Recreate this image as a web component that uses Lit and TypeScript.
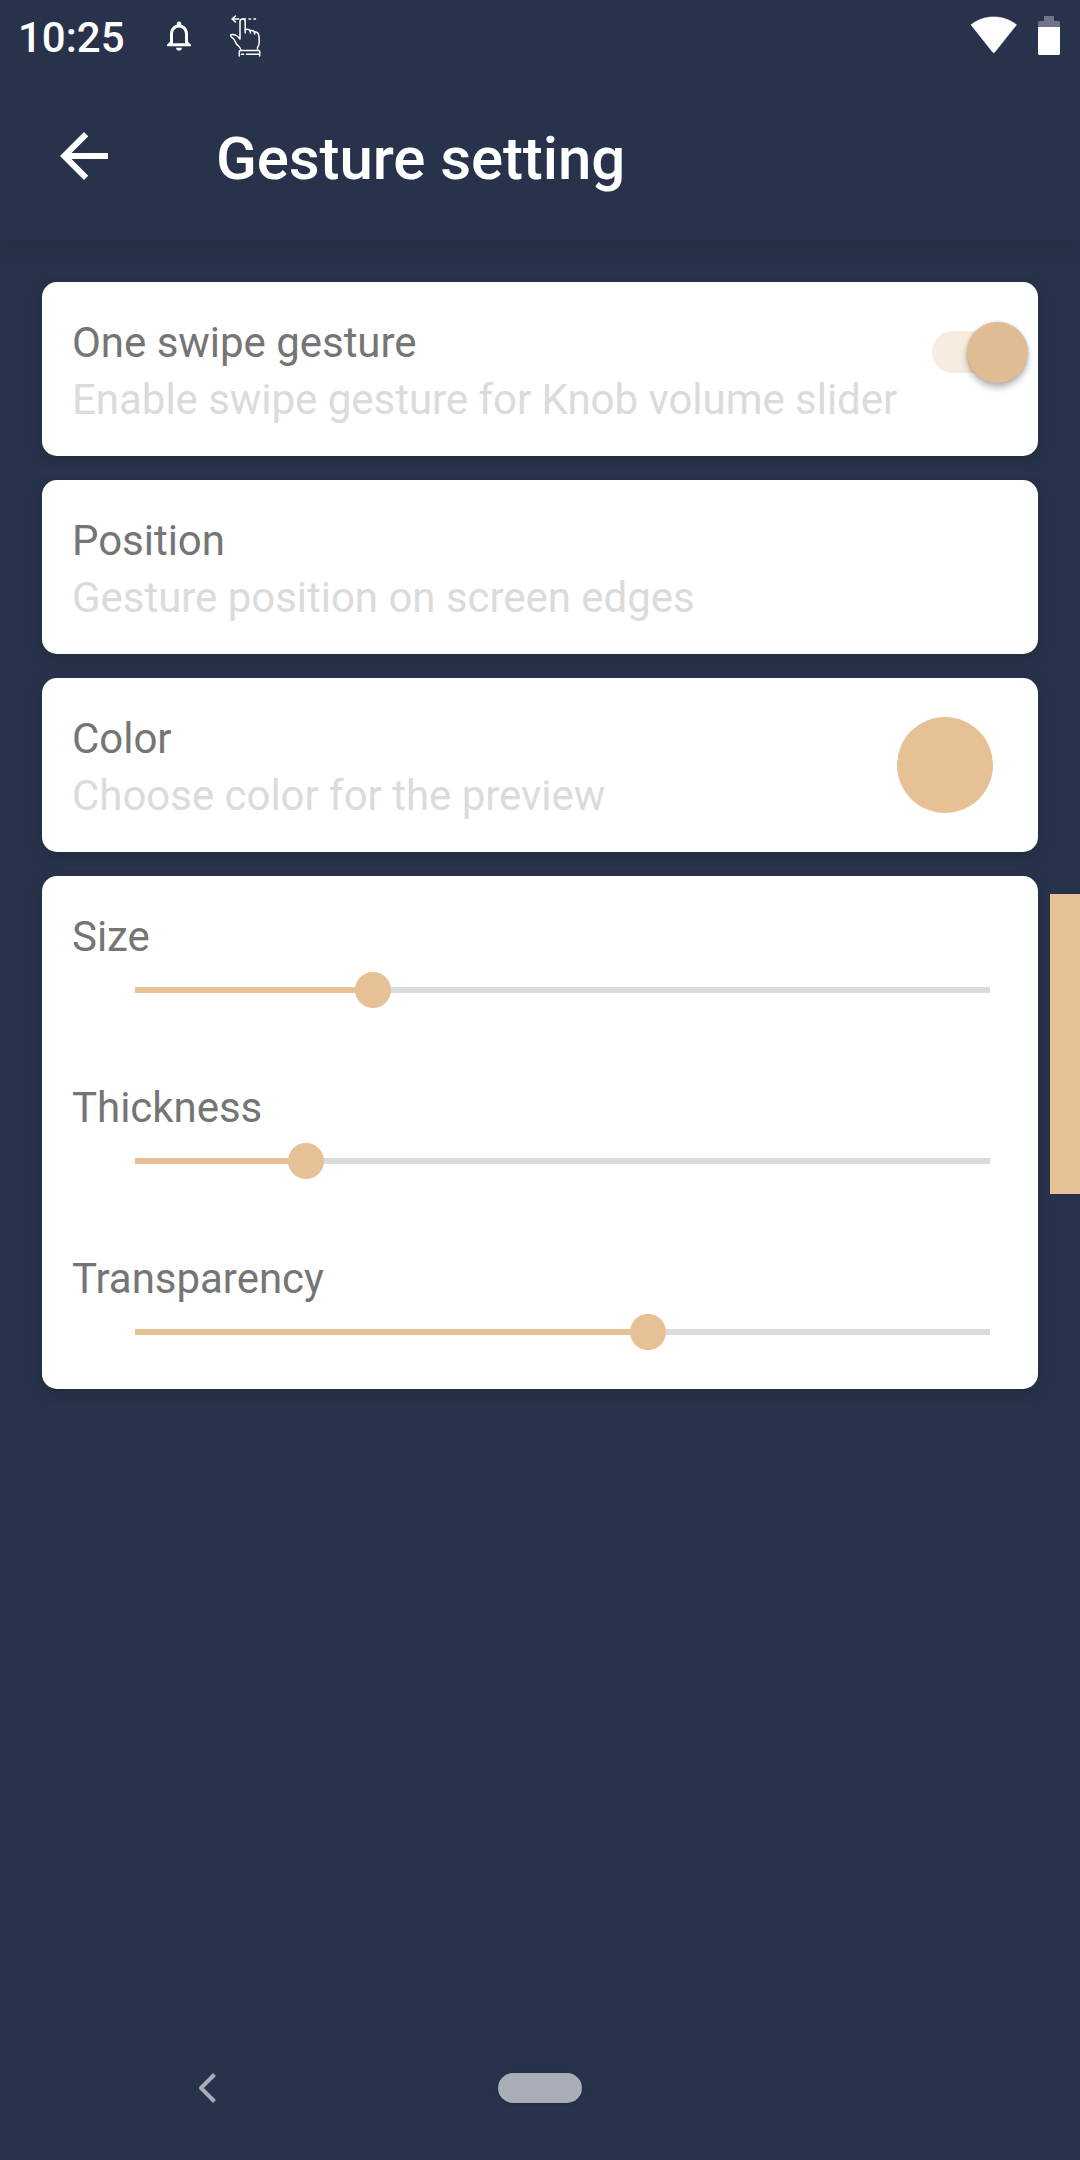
import { LitElement, html, css } from "lit";
import { customElement, property } from "lit/decorators.js";

@customElement("setting-slider")
class SettingSlider extends LitElement {
  @property() label = "";
  @property({ type: Number }) value = 0;

  static styles = css`
    :host {
      display: block;
      height: 171px;
    }
    .label {
      color: #757575;
      font-size: 42px;
      line-height: 50px;
      letter-spacing: -0.03px;
    }
    .bar {
      margin: 10px 18px 0 63px;
      height: 36px;
      display: flex;
      align-items: center;
    }
    .done {
      height: 6px;
      background: #e6c196;
    }
    .knob {
      flex: none;
      width: 36px;
      height: 36px;
      margin: 0 -18px;
      border-radius: 50%;
      background: #e6c196;
      z-index: 1;
    }
    .rest {
      flex: 1;
      height: 6px;
      background: #dbdbdb;
    }
  `;

  render() {
    return html`
      <div class="label">${this.label}</div>
      <div class="bar">
        <div class="done" style="width:${this.value}%"></div>
        <div class="knob"></div>
        <div class="rest"></div>
      </div>
    `;
  }
}

@customElement("app-root")
class AppRoot extends LitElement {
  static styles = css`
    :host {
      display: block;
      font-family: Roboto, "Liberation Sans", sans-serif;
    }
    .screen {
      position: relative;
      display: flex;
      flex-direction: column;
      width: 1080px;
      height: 2160px;
      overflow: hidden;
      background: #28324b;
    }
    svg {
      display: block;
      flex: none;
    }
    .status {
      display: flex;
      height: 72px;
      align-items: flex-start;
    }
    .time {
      box-sizing: border-box;
      width: 143px;
      padding: 13px 0 0 18px;
      color: #fff;
      font-size: 42px;
      line-height: 50px;
      font-weight: 500;
    }
    .spacer {
      flex: 1;
    }
    .appbar {
      display: flex;
      height: 168px;
      box-shadow: 0 5px 10px -2px rgba(35, 47, 62, 0.85);
      clip-path: inset(0 0 -20px 0);
    }
    .back {
      margin: 48px 0 0 48px;
    }
    h1 {
      margin: 52px 0 0 96px;
      color: #fff;
      font-size: 60px;
      line-height: 70px;
      font-weight: 500;
      letter-spacing: -0.1px;
      white-space: nowrap;
    }
    main {
      flex: 1;
      display: flex;
      flex-direction: column;
      gap: 24px;
      padding: 42px 42px 0;
    }
    .card {
      box-sizing: border-box;
      display: flex;
      justify-content: space-between;
      height: 174px;
      padding: 36px 30px 0;
      border-radius: 15px;
      background: #fff;
      box-shadow: 0 4px 10px rgba(33, 46, 58, 0.9);
    }
    .title,
    .hint {
      color: #757575;
      font-size: 42px;
      line-height: 50px;
      letter-spacing: -0.03px;
      white-space: nowrap;
    }
    .hint {
      margin-top: 7px;
      color: #dbdbdb;
    }
    .sliders {
      display: block;
      height: 513px;
    }
    .switch {
      display: flex;
      align-items: flex-start;
      width: 96px;
      height: 61px;
      margin: 4px -20px 0 0;
    }
    .track {
      width: 87px;
      height: 42px;
      margin-top: 9px;
      border-radius: 21px;
      background: #f7ebe0;
    }
    .thumb {
      flex: none;
      width: 61px;
      height: 61px;
      margin-left: -52px;
      border-radius: 50%;
      background: #dfbc93;
      box-shadow: 0 5px 6px rgba(0, 0, 0, 0.26), 0 0 3px rgba(0, 0, 0, 0.18);
    }
    .swatch {
      width: 96px;
      height: 96px;
      margin: 3px 15px 0 0;
      border-radius: 50%;
      background: #e6c196;
    }
    .edge {
      position: absolute;
      right: 0;
      top: 894px;
      width: 30px;
      height: 300px;
      background: #e6c196;
    }
    .nav {
      display: flex;
      align-items: center;
      height: 144px;
      padding-left: 198px;
    }
    .home {
      width: 84px;
      height: 30px;
      margin-left: 282px;
      border-radius: 15px;
      background: #a9adb7;
      box-shadow: 0 1px 3px rgba(0, 0, 0, 0.2);
    }
  `;

  render() {
    return html`
      <div class="screen">
        <div class="status">
          <div class="time">10:25</div>
          <svg width="72" height="72" viewBox="143 0 72 72">
            <path
              transform="translate(161 17.800) scale(1.5)"
              d="M12 22c1.100 0 2-.9 2-2h-4c0 1.100.9 2 2 2zm6-6v-5c0-3.070-1.630-5.640-4.500-6.320V4c0-.83-.67-1.500-1.500-1.500s-1.500.67-1.500 1.500v.68C7.640 5.360 6 7.920 6 11v5l-2 2v1h16v-1l-2-2zm-2 1H8v-6c0-2.480 1.510-4.500 4-4.500s4 2.020 4 4.500v6z"
              fill="#fff"
            />
          </svg>
          <svg width="60" height="72" viewBox="215 0 60 72">
            <g fill="none" stroke="#fff" stroke-width="1.5" stroke-linecap="round" stroke-linejoin="round">
              <path d="M235.500 16l-3.500 3 3.500 3M232.300 19h6.500M243.500 19h2M249 19h1.500M254 19h1.500" />
              <path d="M240 39V21.500a2.600 2.600 0 0 1 5.200 0V33M240 39c-2.500-3.200-5.500-5-9-4.300-1 .8 0 2.300 1.700 3.300 2.300 1.600 2.500 4.500 4 6.300 1.200 1.700 3.500 2.200 4 5.200" />
              <path d="M245.200 29.500c3-1 5.200 0 5.300 3.500M250.500 30.500c2.500-.5 4 .5 4.200 3.500M254.700 31.700c3 0 4.300 2.500 4.300 5.300 0 4 1.300 7-1.500 10.500v2" />
              <path d="M239.300 56v-4.300c0-.8.500-1.200 1.200-1.200h18c.7 0 1.200.4 1.200 1.200V56M241.500 54.300h2M246.500 54.300h13" />
            </g>
          </svg>
          <div class="spacer"></div>
          <svg width="120" height="72" viewBox="960 0 120 72">
            <path d="M971 24.800C984 14.300 1003.500 14.300 1016.500 24.800L994.800 52Q993.700 53.400 992.600 52Z" fill="#fff" stroke="#fff" stroke-width=".6" stroke-linejoin="round" />
            <path d="M1044 16h10v5h4.500a1.500 1.500 0 0 1 1.500 1.500V27h-22v-4.500a1.500 1.500 0 0 1 1.500-1.500h4.500z" fill="#6f7586" />
            <path d="M1038 27h22v26.500a1.500 1.500 0 0 1-1.500 1.500h-19a1.500 1.500 0 0 1-1.500-1.500z" fill="#fff" />
          </svg>
        </div>
        <div class="appbar">
          <svg class="back" width="72" height="72" viewBox="0 0 24 24">
            <path d="M20 11H7.830l5.590-5.590L12 4l-8 8 8 8 1.410-1.410L7.830 13H20z" fill="#fff" />
          </svg>
          <h1>Gesture setting</h1>
        </div>
        <main>
          <div class="card">
            <div>
              <div class="title">One swipe gesture</div>
              <div class="hint">Enable swipe gesture for Knob volume slider</div>
            </div>
            <div class="switch"><div class="track"></div><div class="thumb"></div></div>
          </div>
          <div class="card">
            <div>
              <div class="title">Position</div>
              <div class="hint">Gesture position on screen edges</div>
            </div>
          </div>
          <div class="card">
            <div>
              <div class="title">Color</div>
              <div class="hint">Choose color for the preview</div>
            </div>
            <div class="swatch"></div>
          </div>
          <div class="card sliders">
            <setting-slider label="Size" value="27.84"></setting-slider>
            <setting-slider label="Thickness" value="20"></setting-slider>
            <setting-slider label="Transparency" value="60"></setting-slider>
          </div>
        </main>
        <div class="nav">
          <svg width="18" height="30" viewBox="0 0 18 30">
            <path d="M16.500 1.500L3 15l13.500 13.500" fill="none" stroke="#a9adb7" stroke-width="4" stroke-linejoin="round" />
          </svg>
          <div class="home"></div>
        </div>
        <div class="edge"></div>
      </div>
    `;
  }
}
